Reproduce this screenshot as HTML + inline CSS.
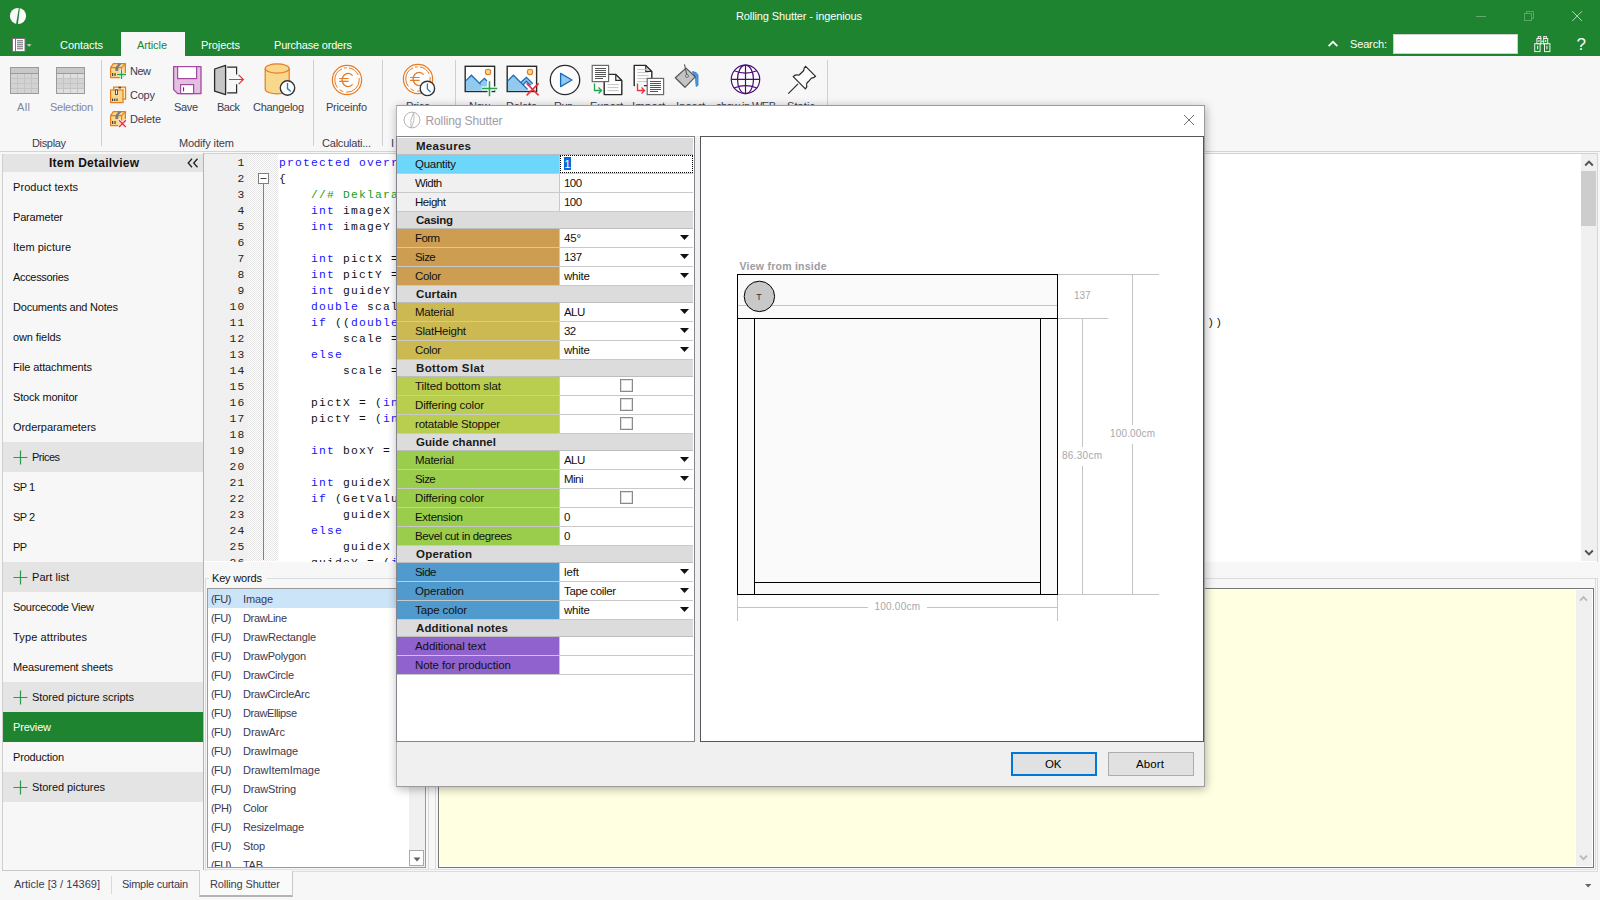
<!DOCTYPE html>
<html><head><meta charset="utf-8"><title>Rolling Shutter - ingenious</title>
<style>
html,body{margin:0;padding:0;}
body{width:1600px;height:900px;position:relative;overflow:hidden;background:#f7f7f7;font-family:"Liberation Sans",sans-serif;}
.b{position:absolute;display:block;}
.t{position:absolute;white-space:nowrap;display:block;}
.m{font-family:"Liberation Mono",monospace;}
</style></head><body>
<div class="b" style="left:0px;top:0px;width:1600px;height:56px;background:#1e8430;"></div>
<span class="t" style="left:736px;top:8px;font-size:11px;line-height:16px;color:#fff;letter-spacing:-0.116px;">Rolling Shutter - ingenious</span>
<div class="b" style="left:121px;top:32px;width:64px;height:24px;background:#f7f7f7;"></div>
<span class="t" style="left:60px;top:37px;font-size:11px;line-height:16px;color:#fff;letter-spacing:-0.058px;">Contacts</span>
<span class="t" style="left:137px;top:37px;font-size:11px;line-height:16px;color:#1e8430;letter-spacing:-0.094px;">Article</span>
<span class="t" style="left:201px;top:37px;font-size:11px;line-height:16px;color:#fff;letter-spacing:-0.105px;">Projects</span>
<span class="t" style="left:274px;top:37px;font-size:11px;line-height:16px;color:#fff;letter-spacing:-0.193px;">Purchase orders</span>
<span class="t" style="left:1350px;top:36px;font-size:11px;line-height:16px;color:#fff;letter-spacing:-0.152px;">Search:</span>
<div class="b" style="left:1393px;top:34px;width:125px;height:20px;background:#fff;border:1px solid #cfcfcf;box-sizing:border-box;"></div>
<svg class="b" style="left:8px;top:6px;" width="20" height="20" viewBox="0 0 20 20"><circle cx="10" cy="10" r="8.1" fill="#fbfbfb"/><path d="M10.9 1.5 L11.9 1.5 L9.9 18.6 L8.0 18.6 Z" fill="#1e8430"/></svg>
<svg class="b" style="left:11px;top:37px;" width="22" height="16" viewBox="0 0 22 16"><rect x="1.5" y="1.5" width="12.5" height="13" fill="#fff" stroke="#7f6f7d" stroke-width="1"/><path d="M4.5 2 V14" stroke="#7f6f7d" stroke-width="1"/><path d="M6 3.8 H12 M6 5.8 H12 M6 7.8 H12 M6 9.8 H12 M6 11.8 H12" stroke="#666" stroke-width="1"/><path d="M15.6 7.2 H20.6 L18.1 9.7 Z" fill="#d3cbd3"/></svg>
<svg class="b" style="left:1327px;top:39px;" width="12" height="9" viewBox="0 0 12 9"><path d="M1.6 7.2 L6 2.8 L10.4 7.2" fill="none" stroke="#fff" stroke-width="1.7"/></svg>
<svg class="b" style="left:1533px;top:35px;" width="19" height="18" viewBox="0 0 19 18"><g fill="none" stroke="#f3eef3" stroke-width="1"><rect x="1.7" y="8.7" width="5.4" height="7.9"/><rect x="11.5" y="8.7" width="5.4" height="7.9"/><rect x="3.9" y="3.5" width="4" height="5.2"/><rect x="10.7" y="3.5" width="4" height="5.2"/><rect x="5.2" y="1.6" width="2.6" height="1.9"/><rect x="10.8" y="1.6" width="2.6" height="1.9"/><path d="M4.6 10.8 V14.2 M13.9 10.8 V14.2 M5.9 5 V7 M12.7 5 V7" stroke-width="1.1"/><path d="M8.4 6.3 H10.2" stroke-width="1.1"/><path d="M7.4 9.4 Q9.3 7.4 11.2 9.4"/></g></svg>
<span class="t" style="left:1576.5px;top:35.5px;font-size:17px;line-height:18px;color:#fff;">?</span>
<div class="b" style="left:1476px;top:16px;width:10px;height:1px;background:#63a970;"></div>
<svg class="b" style="left:1523px;top:10px;" width="13" height="13" viewBox="0 0 13 13"><path d="M3.5 3.5 V1.5 H10.5 V8.5 H8.5" fill="none" stroke="#5da56b"/><rect x="1.5" y="3.5" width="7" height="7" fill="none" stroke="#5da56b"/></svg>
<svg class="b" style="left:1571px;top:10px;" width="13" height="13" viewBox="0 0 13 13"><path d="M1.2 1.2 L11 11 M11 1.2 L1.2 11" stroke="#b4d5ba" stroke-width="1" fill="none"/></svg>
<div class="b" style="left:0px;top:56px;width:1600px;height:95px;background:#f7f7f7;"></div>
<div class="b" style="left:0px;top:151px;width:1600px;height:1px;background:#d4d4d4;"></div>
<div class="b" style="left:101px;top:60px;width:1px;height:86px;background:#d0d0d0;"></div>
<div class="b" style="left:313px;top:60px;width:1px;height:86px;background:#d0d0d0;"></div>
<div class="b" style="left:382px;top:60px;width:1px;height:86px;background:#d0d0d0;"></div>
<div class="b" style="left:455px;top:60px;width:1px;height:86px;background:#d0d0d0;"></div>
<div class="b" style="left:827px;top:60px;width:1px;height:86px;background:#d0d0d0;"></div>
<span class="t" style="left:17px;top:99px;font-size:11px;line-height:16px;color:#85859a;letter-spacing:0.388px;">All</span>
<span class="t" style="left:50px;top:99px;font-size:11px;line-height:16px;color:#85859a;letter-spacing:-0.281px;">Selection</span>
<span class="t" style="left:32px;top:135px;font-size:11px;line-height:16px;color:#3c3c50;letter-spacing:-0.345px;">Display</span>
<span class="t" style="left:130px;top:63px;font-size:11px;line-height:16px;color:#3c3c50;letter-spacing:-0.503px;">New</span>
<span class="t" style="left:130px;top:87px;font-size:11px;line-height:16px;color:#3c3c50;letter-spacing:-0.226px;">Copy</span>
<span class="t" style="left:130px;top:111px;font-size:11px;line-height:16px;color:#3c3c50;letter-spacing:-0.159px;">Delete</span>
<span class="t" style="left:174px;top:99px;font-size:11px;line-height:16px;color:#3c3c50;letter-spacing:-0.357px;">Save</span>
<span class="t" style="left:217px;top:99px;font-size:11px;line-height:16px;color:#3c3c50;letter-spacing:-0.485px;">Back</span>
<span class="t" style="left:253px;top:99px;font-size:11px;line-height:16px;color:#3c3c50;letter-spacing:-0.276px;">Changelog</span>
<span class="t" style="left:179px;top:135px;font-size:11px;line-height:16px;color:#3c3c50;letter-spacing:-0.124px;">Modify item</span>
<span class="t" style="left:326px;top:99px;font-size:11px;line-height:16px;color:#3c3c50;letter-spacing:-0.225px;">Priceinfo</span>
<span class="t" style="left:322px;top:135px;font-size:11px;line-height:16px;color:#3c3c50;letter-spacing:-0.214px;">Calculati...</span>
<span class="t" style="left:391px;top:135px;font-size:11px;line-height:16px;color:#3c3c50;">I</span>
<span class="t" style="left:406px;top:98.3px;font-size:11px;line-height:16px;color:#3c3c50;letter-spacing:-0.265px;">Price</span>
<span class="t" style="left:469px;top:98.3px;font-size:11px;line-height:16px;color:#3c3c50;letter-spacing:-0.503px;">New</span>
<span class="t" style="left:506px;top:98.3px;font-size:11px;line-height:16px;color:#3c3c50;letter-spacing:-0.159px;">Delete</span>
<span class="t" style="left:554px;top:98.3px;font-size:11px;line-height:16px;color:#3c3c50;letter-spacing:-0.550px;">Run</span>
<span class="t" style="left:590px;top:98.3px;font-size:11px;line-height:16px;color:#3c3c50;letter-spacing:0.242px;">Export</span>
<span class="t" style="left:632px;top:98.3px;font-size:11px;line-height:16px;color:#3c3c50;letter-spacing:0.365px;">Import</span>
<span class="t" style="left:676px;top:98.3px;font-size:11px;line-height:16px;color:#3c3c50;letter-spacing:0.298px;">Insert</span>
<span class="t" style="left:716px;top:98.3px;font-size:11px;line-height:16px;color:#3c3c50;letter-spacing:-0.541px;">show in WEB</span>
<span class="t" style="left:787px;top:98.3px;font-size:11px;line-height:16px;color:#3c3c50;letter-spacing:0.098px;">Static</span>
<svg class="b" style="left:10px;top:67px;" width="29" height="27" viewBox="0 0 29 27"><rect x="0.5" y="0.5" width="28" height="26" fill="#d3d3d3" stroke="#9b9b9b"/><rect x="1" y="1" width="27" height="5.5" fill="#c8c8c8"/><path d="M0.5 6.5 H28.5" stroke="#9b9b9b"/><path d="M7.5 7 V26 M14.5 7 V26 M21.5 7 V26 M1 11.5 H28 M1 16.5 H28 M1 21.5 H28" stroke="#c4c4c4" fill="none"/></svg>
<svg class="b" style="left:56px;top:67px;" width="29" height="27" viewBox="0 0 29 27"><rect x="0.5" y="0.5" width="28" height="26" fill="#d3d3d3" stroke="#9b9b9b"/><rect x="1" y="7" width="27" height="5" fill="#dfdfdf"/><rect x="1" y="22" width="27" height="4" fill="#dfdfdf"/><rect x="1" y="1" width="27" height="5.5" fill="#c8c8c8"/><path d="M0.5 6.5 H28.5" stroke="#9b9b9b"/><path d="M7.5 7 V26 M14.5 7 V26 M21.5 7 V26 M1 11.5 H28 M1 16.5 H28 M1 21.5 H28" stroke="#c4c4c4" fill="none"/></svg>
<svg class="b" style="left:110px;top:63px;" width="18" height="18" viewBox="0 0 18 18"><path d="M0.6 4.6 L3.4 0.6 H15.4 V10.5 L12 14.6 H0.6 Z" fill="#f8d88c" stroke="#e87a22" stroke-width="1.2" stroke-linejoin="round"/><path d="M0.6 4.6 H11.6 L15.2 0.8 M11.6 4.6 V14.4" fill="none" stroke="#e87a22" stroke-width="1.1"/><path d="M8.6 0.6 H11.6 L8.2 4.6 V8 H5.4 V4.4 Z" fill="#7a7a7a"/><path d="M2.7 10 V13 M5 10 V13" stroke="#222" stroke-width="1"/><path d="M6.6 11.5 H16.4 M11.5 6.8 V16.4" stroke="#f7f7f7" stroke-width="3.2"/><path d="M7 11.5 H16 M11.5 7 V16" stroke="#1fa84a" stroke-width="1.3"/></svg>
<svg class="b" style="left:110px;top:86px;" width="18" height="18" viewBox="0 0 18 18"><path d="M3.6 4 V1.2 H15.6 V13.2 H13" fill="#fbe9bf" stroke="#e87a22" stroke-width="1.2"/><path d="M8.6 0.8 h2.4 v1.6 h-2.4 z" fill="#444"/><rect x="0.6" y="4" width="12.4" height="12.6" fill="#f8d88c" stroke="#e87a22" stroke-width="1.2"/><rect x="5.5" y="4" width="2" height="4.4" fill="#fff" stroke="#444" stroke-width="0.9"/><path d="M2.6 12.6 V15 M4.8 12.6 V15 M7 12.6 V15" stroke="#222" stroke-width="1"/></svg>
<svg class="b" style="left:110px;top:111px;" width="18" height="18" viewBox="0 0 18 18"><path d="M0.6 4.6 L3.4 0.6 H15.4 V10.5 L12 14.6 H0.6 Z" fill="#f8d88c" stroke="#e87a22" stroke-width="1.2" stroke-linejoin="round"/><path d="M0.6 4.6 H11.6 L15.2 0.8 M11.6 4.6 V14.4" fill="none" stroke="#e87a22" stroke-width="1.1"/><path d="M8.6 0.6 H11.6 L8.2 4.6 V8 H5.4 V4.4 Z" fill="#7a7a7a"/><path d="M2.7 10 V13 M5 10 V13" stroke="#222" stroke-width="1"/><path d="M8.6 8.8 L16.2 16.4 M16.2 8.8 L8.6 16.4" stroke="#f7f7f7" stroke-width="3"/><path d="M9 9.2 L15.8 16 M15.8 9.2 L9 16" stroke="#e8303f" stroke-width="1.3"/></svg>
<svg class="b" style="left:172px;top:65px;" width="31" height="30" viewBox="0 0 31 30"><path d="M1.6 1.6 H29 V28.6 H5.6 L1.6 24.6 Z" fill="#e3c0e0" stroke="#a349a4" stroke-width="1.3" stroke-linejoin="round"/><rect x="5.6" y="1.6" width="19" height="12" fill="#fff" stroke="#a349a4" stroke-width="1.2"/><rect x="8.6" y="19.6" width="13" height="9" fill="#fff" stroke="#a349a4" stroke-width="1.2"/><path d="M11.6 22.3 V26.3" stroke="#333" stroke-width="1"/></svg>
<svg class="b" style="left:213px;top:64px;" width="33" height="32" viewBox="0 0 33 32"><path d="M1.6 5 L12.6 1.4 V30.6 L1.6 27.2 Z" fill="#c6c6c6" stroke="#2a2a2a" stroke-width="1.3" stroke-linejoin="round"/><path d="M14.2 3.2 H23.6 V10.6 M23.6 20.2 V28.8 H14.2" fill="none" stroke="#2a2a2a" stroke-width="1.2"/><path d="M16 15.5 H30.2 M25.6 10.9 L30.4 15.5 L25.6 20.1" fill="none" stroke="#e8303f" stroke-width="1.2"/></svg>
<svg class="b" style="left:263px;top:62px;" width="34" height="35" viewBox="0 0 34 35"><path d="M2.2 6.5 V27.2 A12 4.6 0 0 0 26.2 27.2 V6.5" fill="#f8d88c" stroke="#e87a22" stroke-width="1.2"/><ellipse cx="14.2" cy="6.5" rx="12" ry="4.6" fill="#f8d88c" stroke="#e87a22" stroke-width="1.2"/><circle cx="24.5" cy="26" r="7.2" fill="#fff" stroke="#333" stroke-width="1.4"/><path d="M24.5 21 V26.6 L27.8 29.6" fill="none" stroke="#1c7cd5" stroke-width="1.3"/></svg>
<svg class="b" style="left:331px;top:64px;" width="34" height="34" viewBox="0 0 34 34"><circle cx="16" cy="16" r="14.6" fill="#fdfdfd" stroke="#e87a22" stroke-width="1.2"/><circle cx="16" cy="16" r="12.2" fill="none" stroke="#e87a22" stroke-width="1" stroke-dasharray="20 3 4 3 22 2 3 2 12 3"/><path d="M21.6 11.6 A6 6.6 0 1 0 21.6 20.4" fill="none" stroke="#e87a22" stroke-width="1.3"/><path d="M8.2 14.5 H17.6 M8.2 17.3 H17.6" stroke="#e87a22" stroke-width="1.2"/></svg>
<svg class="b" style="left:402px;top:63px;" width="34" height="34" viewBox="0 0 34 34"><circle cx="16" cy="16" r="14.6" fill="#fdfdfd" stroke="#e87a22" stroke-width="1.2"/><circle cx="16" cy="16" r="12.2" fill="none" stroke="#e87a22" stroke-width="1" stroke-dasharray="20 3 4 3 22 2 3 2 12 3"/><path d="M21.6 11.6 A6 6.6 0 1 0 21.6 20.4" fill="none" stroke="#e87a22" stroke-width="1.3"/><path d="M8.2 14.5 H17.6 M8.2 17.3 H17.6" stroke="#e87a22" stroke-width="1.2"/><circle cx="25.4" cy="25.4" r="7.2" fill="#fff" stroke="#333" stroke-width="1.4"/><path d="M25.4 20.4 V26 L28.6 29" fill="none" stroke="#1c7cd5" stroke-width="1.3"/></svg>
<svg class="b" style="left:464px;top:65px;" width="36" height="33" viewBox="0 0 36 33"><rect x="1.2" y="1.3" width="29.4" height="25.2" fill="#fff" stroke="#2a2a2a" stroke-width="1.4"/><circle cx="24" cy="7" r="2.7" fill="#f8d88c" stroke="#e87a22" stroke-width="1.1"/><path d="M2 15.6 L7.4 10.2 L16 18.8 L20.4 13.4 L23 16 V25.8 H2 Z" fill="#92c9ee"/><path d="M2 15.6 L7.4 10.2 L16.6 19.4 M15.4 18.2 L20.4 13.4 L23 16" fill="none" stroke="#1a6ab8" stroke-width="1.3"/><path d="M17.6 23.5 H33.8 M25.5 15.8 V31.6" stroke="#f7f7f7" stroke-width="4"/><path d="M18 23.5 H33.2 M25.5 16.2 V31.2" stroke="#1fa84a" stroke-width="1.5"/></svg>
<svg class="b" style="left:506px;top:65px;" width="36" height="33" viewBox="0 0 36 33"><rect x="1.2" y="1.3" width="29.4" height="25.2" fill="#fff" stroke="#2a2a2a" stroke-width="1.4"/><circle cx="24" cy="7" r="2.7" fill="#f8d88c" stroke="#e87a22" stroke-width="1.1"/><path d="M2 15.6 L7.4 10.2 L21.6 24.4 L20.2 25.8 H2 Z" fill="#92c9ee"/><path d="M14.6 17.6 L20.4 12.4 L26.6 18.8 L24.8 20.4 L20.4 16 L17 19.8 Z" fill="#92c9ee"/><path d="M2 15.6 L7.4 10.2 L21.6 24.4 M14.8 17.4 L20.4 12.4 L26.8 18.8 M17.2 19.8 L20.4 16.2 L24.6 20.4" fill="none" stroke="#1a6ab8" stroke-width="1.3"/><path d="M20.6 18.4 L32.6 30.4 M32.6 18.4 L20.6 30.4" stroke="#e8303f" stroke-width="1.5"/></svg>
<svg class="b" style="left:549px;top:64px;" width="32" height="32" viewBox="0 0 32 32"><circle cx="16" cy="16" r="14.7" fill="#fdfdfd" stroke="#2a2a2a" stroke-width="1.3"/><path d="M11.6 9.4 V22.6 L23 16 Z" fill="#92c9ee" stroke="#1a6ab8" stroke-width="1.3" stroke-linejoin="round"/></svg>
<svg class="b" style="left:591px;top:64px;" width="33" height="33" viewBox="0 0 33 33"><path d="M13.2 10.4 H24.8 L30.8 16.4 V30.6 H13.2 Z" fill="#fff" stroke="#2a2a2a" stroke-width="1.4" stroke-linejoin="round"/><path d="M24.8 10.4 V16.4 H30.8" fill="none" stroke="#2a2a2a" stroke-width="1.2"/><path d="M16.4 26.6 h11.2" stroke="#c4c4c4" stroke-width="1"/><path d="M16.4 23.6 h11.2" stroke="#c4c4c4" stroke-width="1"/><path d="M16.4 20.6 h11.2" stroke="#c4c4c4" stroke-width="1"/><rect x="1.2" y="1.4" width="16.4" height="16.2" fill="#fff" stroke="#6a6a6a" stroke-width="1.2"/><path d="M4 4.5 h11 m-11 2 h11 m-11 2 h11 m-11 2 h11 m-11 2 h11 m-11 2 h8" stroke="#555" stroke-width="1" fill="none"/><path d="M3.5 19.5 V26.5 H10.5 M7.5 23.5 L10.5 26.5 L7.5 29.5" fill="none" stroke="#1fa84a" stroke-width="1.3"/></svg>
<svg class="b" style="left:633px;top:64px;" width="33" height="33" viewBox="0 0 33 33"><path d="M1.2 1.4 H12.8 L18.8 7.4 V21.6 H1.2 Z" fill="#fff" stroke="#2a2a2a" stroke-width="1.4" stroke-linejoin="round"/><path d="M12.8 1.4 V7.4 H18.8" fill="none" stroke="#2a2a2a" stroke-width="1.2"/><path d="M4.4 17.6 h11.2" stroke="#c4c4c4" stroke-width="1"/><path d="M4.4 14.6 h11.2" stroke="#c4c4c4" stroke-width="1"/><path d="M4.4 11.6 h11.2" stroke="#c4c4c4" stroke-width="1"/><path d="M4.4 8.6 h11.2" stroke="#c4c4c4" stroke-width="1"/><path d="M4.4 5.6 h11.2" stroke="#c4c4c4" stroke-width="1"/><rect x="2" y="19.5" width="9" height="13" fill="#f7f7f7"/><rect x="14.2" y="14.4" width="16.4" height="16.2" fill="#fff" stroke="#6a6a6a" stroke-width="1.2"/><path d="M17 17.5 h11 m-11 2 h11 m-11 2 h11 m-11 2 h11 m-11 2 h11 m-11 2 h8" stroke="#555" stroke-width="1" fill="none"/><path d="M4.5 19.5 V26.5 H11.5 M8.5 23.5 L11.5 26.5 L8.5 29.5" fill="none" stroke="#e8303f" stroke-width="1.3"/></svg>
<svg class="b" style="left:673px;top:62px;" width="28" height="28" viewBox="0 0 28 28"><path d="M19.4 9.6 Q24.6 10.4 25 13.4 V23.2 L23.2 24.6 Q22.8 16 21.2 13.4 Z" fill="#4a9ade" stroke="#2a7ac8" stroke-width="0.8"/><path d="M2.3 15.7 L13 6.1 L22.2 14.8 L12 25.3 Z" fill="#c4c4c4" stroke="#555" stroke-width="1.2" stroke-linejoin="round"/><path d="M11.5 2.4 L13.8 13" stroke="#555" stroke-width="1.1"/><circle cx="14" cy="14" r="1.4" fill="#fff" stroke="#555" stroke-width="0.9"/></svg>
<svg class="b" style="left:730px;top:64px;" width="32" height="32" viewBox="0 0 32 32"><g fill="none" stroke="#4b0a78" stroke-width="1.2"><circle cx="15.5" cy="15.4" r="14.2" fill="#fdfdfd"/><ellipse cx="15.5" cy="15.4" rx="8" ry="14.2"/><path d="M15.5 1.2 V29.6 M1.3 15.4 H29.7"/><path d="M4.2 6.8 Q15.5 11.6 26.8 6.8 M4.2 24 Q15.5 19.2 26.8 24"/></g></svg>
<svg class="b" style="left:786px;top:64px;" width="32" height="32" viewBox="0 0 32 32"><path d="M2.3 29.6 L12 19.9" stroke="#2a2a2a" stroke-width="1.2"/><path d="M7.2 12.6 L19.4 24.8 Q21.6 22.6 20.6 20.4 Q20.4 18.6 22.4 17.6 L25.4 14.2 Q27.4 14.4 29.6 12.3 L19.6 2.3 Q17.4 4.4 17.8 6.5 L14.2 10 Q12.6 11.8 11 10.8 Q8.8 10.6 7.2 12.6 Z" fill="#fdfdfd" stroke="#2a2a2a" stroke-width="1.2" stroke-linejoin="round"/></svg>
<div class="b" style="left:2px;top:154px;width:1px;height:716px;background:#cfcfcf;"></div>
<div class="b" style="left:203px;top:153px;width:1px;height:717px;background:#b4b4b4;"></div>
<div class="b" style="left:3px;top:154px;width:200px;height:18px;background:#e4e4e4;"></div>
<span class="t" style="left:49px;top:154.5px;font-size:12px;line-height:16px;color:#111;font-weight:bold;letter-spacing:0.236px;">Item Detailview</span>
<svg class="b" style="left:187px;top:158px;" width="12" height="10" viewBox="0 0 12 10"><path d="M5 .8 L1.2 5 L5 9.2 M10.5 .8 L6.7 5 L10.5 9.2" fill="none" stroke="#222" stroke-width="1.3"/></svg>
<span class="t" style="left:13px;top:179px;font-size:11px;line-height:16px;color:#111;letter-spacing:0.067px;">Product texts</span>
<span class="t" style="left:13px;top:209px;font-size:11px;line-height:16px;color:#111;letter-spacing:-0.169px;">Parameter</span>
<span class="t" style="left:13px;top:239px;font-size:11px;line-height:16px;color:#111;letter-spacing:0.049px;">Item picture</span>
<span class="t" style="left:13px;top:269px;font-size:11px;line-height:16px;color:#111;letter-spacing:-0.330px;">Accessories</span>
<span class="t" style="left:13px;top:299px;font-size:11px;line-height:16px;color:#111;letter-spacing:-0.213px;">Documents and Notes</span>
<span class="t" style="left:13px;top:329px;font-size:11px;line-height:16px;color:#111;letter-spacing:-0.102px;">own fields</span>
<span class="t" style="left:13px;top:359px;font-size:11px;line-height:16px;color:#111;letter-spacing:-0.113px;">File attachments</span>
<span class="t" style="left:13px;top:389px;font-size:11px;line-height:16px;color:#111;letter-spacing:-0.187px;">Stock monitor</span>
<span class="t" style="left:13px;top:419px;font-size:11px;line-height:16px;color:#111;letter-spacing:-0.054px;">Orderparameters</span>
<div class="b" style="left:3px;top:442px;width:200px;height:30px;background:#e4e4e4;"></div>
<svg class="b" style="left:13px;top:450px;" width="15" height="15" viewBox="0 0 15 15"><path d="M7.5 0.5 V14.5 M0.5 7.5 H14.5" stroke="#2a9a45" stroke-width="1.2" fill="none"/></svg>
<span class="t" style="left:32px;top:449px;font-size:11px;line-height:16px;color:#111;letter-spacing:-0.512px;">Prices</span>
<span class="t" style="left:13px;top:479px;font-size:11px;line-height:16px;color:#111;letter-spacing:-0.550px;">SP 1</span>
<span class="t" style="left:13px;top:509px;font-size:11px;line-height:16px;color:#111;letter-spacing:-0.550px;">SP 2</span>
<span class="t" style="left:13px;top:539px;font-size:11px;line-height:16px;color:#111;letter-spacing:-0.550px;">PP</span>
<div class="b" style="left:3px;top:562px;width:200px;height:30px;background:#e4e4e4;"></div>
<svg class="b" style="left:13px;top:570px;" width="15" height="15" viewBox="0 0 15 15"><path d="M7.5 0.5 V14.5 M0.5 7.5 H14.5" stroke="#2a9a45" stroke-width="1.2" fill="none"/></svg>
<span class="t" style="left:32px;top:569px;font-size:11px;line-height:16px;color:#111;letter-spacing:0.041px;">Part list</span>
<span class="t" style="left:13px;top:599px;font-size:11px;line-height:16px;color:#111;letter-spacing:-0.315px;">Sourcecode View</span>
<span class="t" style="left:13px;top:629px;font-size:11px;line-height:16px;color:#111;letter-spacing:0.132px;">Type attributes</span>
<span class="t" style="left:13px;top:659px;font-size:11px;line-height:16px;color:#111;letter-spacing:-0.160px;">Measurement sheets</span>
<div class="b" style="left:3px;top:682px;width:200px;height:30px;background:#e4e4e4;"></div>
<svg class="b" style="left:13px;top:690px;" width="15" height="15" viewBox="0 0 15 15"><path d="M7.5 0.5 V14.5 M0.5 7.5 H14.5" stroke="#2a9a45" stroke-width="1.2" fill="none"/></svg>
<span class="t" style="left:32px;top:689px;font-size:11px;line-height:16px;color:#111;letter-spacing:-0.063px;">Stored picture scripts</span>
<div class="b" style="left:3px;top:712px;width:200px;height:30px;background:#1e8430;"></div>
<span class="t" style="left:13px;top:719px;font-size:11px;line-height:16px;color:#fff;letter-spacing:-0.187px;">Preview</span>
<span class="t" style="left:13px;top:749px;font-size:11px;line-height:16px;color:#111;letter-spacing:-0.177px;">Production</span>
<div class="b" style="left:3px;top:772px;width:200px;height:30px;background:#e4e4e4;"></div>
<svg class="b" style="left:13px;top:780px;" width="15" height="15" viewBox="0 0 15 15"><path d="M7.5 0.5 V14.5 M0.5 7.5 H14.5" stroke="#2a9a45" stroke-width="1.2" fill="none"/></svg>
<span class="t" style="left:32px;top:779px;font-size:11px;line-height:16px;color:#111;letter-spacing:-0.070px;">Stored pictures</span>
<div class="b" style="left:204px;top:153px;width:1394px;height:409px;background:#fff;border:1px solid #d2d2d2;border-left:none;border-bottom:none;box-sizing:border-box;"></div>
<div class="b" style="left:1597px;top:153px;width:1px;height:719px;background:#d6d6d6;"></div>
<div class="b" style="left:204px;top:154px;width:44px;height:407px;background:#f0f0f0;"></div>
<svg class="b" style="left:248px;top:154px;" width="30" height="407" viewBox="0 0 30 407"><defs><pattern id="ck" width="2" height="2" patternUnits="userSpaceOnUse"><rect width="2" height="2" fill="#fff"/><rect width="1" height="1" fill="#e6e6e6"/><rect x="1" y="1" width="1" height="1" fill="#e6e6e6"/></pattern></defs><rect width="30" height="407" fill="url(#ck)"/></svg>
<span class="t m" style="left:237.4px;top:155.3px;font-size:11.3px;line-height:16px;color:#222;white-space:pre;letter-spacing:1.22px;">1</span>
<span class="t m" style="left:279px;top:155.3px;font-size:11.3px;letter-spacing:1.22px;line-height:16px;color:#111;white-space:pre;"><span style="color:#1414ff">protected override void</span><span style="color:#111"> OnPaint(PaintEventArgs e)</span></span>
<span class="t m" style="left:237.4px;top:171.3px;font-size:11.3px;line-height:16px;color:#222;white-space:pre;letter-spacing:1.22px;">2</span>
<span class="t m" style="left:279px;top:171.3px;font-size:11.3px;letter-spacing:1.22px;line-height:16px;color:#111;white-space:pre;"><span style="color:#111">{</span></span>
<span class="t m" style="left:237.4px;top:187.3px;font-size:11.3px;line-height:16px;color:#222;white-space:pre;letter-spacing:1.22px;">3</span>
<span class="t m" style="left:279px;top:187.3px;font-size:11.3px;letter-spacing:1.22px;line-height:16px;color:#111;white-space:pre;"><span style="color:#1a9a1a">    //# Deklaration der Variablen</span></span>
<span class="t m" style="left:237.4px;top:203.3px;font-size:11.3px;line-height:16px;color:#222;white-space:pre;letter-spacing:1.22px;">4</span>
<span class="t m" style="left:279px;top:203.3px;font-size:11.3px;letter-spacing:1.22px;line-height:16px;color:#111;white-space:pre;"><span style="color:#1414ff">    int</span><span style="color:#111"> imageX = 320;</span></span>
<span class="t m" style="left:237.4px;top:219.3px;font-size:11.3px;line-height:16px;color:#222;white-space:pre;letter-spacing:1.22px;">5</span>
<span class="t m" style="left:279px;top:219.3px;font-size:11.3px;letter-spacing:1.22px;line-height:16px;color:#111;white-space:pre;"><span style="color:#1414ff">    int</span><span style="color:#111"> imageY = 320;</span></span>
<span class="t m" style="left:237.4px;top:235.3px;font-size:11.3px;line-height:16px;color:#222;white-space:pre;letter-spacing:1.22px;">6</span>
<span class="t m" style="left:237.4px;top:251.3px;font-size:11.3px;line-height:16px;color:#222;white-space:pre;letter-spacing:1.22px;">7</span>
<span class="t m" style="left:279px;top:251.3px;font-size:11.3px;letter-spacing:1.22px;line-height:16px;color:#111;white-space:pre;"><span style="color:#1414ff">    int</span><span style="color:#111"> pictX = 0;</span></span>
<span class="t m" style="left:237.4px;top:267.3px;font-size:11.3px;line-height:16px;color:#222;white-space:pre;letter-spacing:1.22px;">8</span>
<span class="t m" style="left:279px;top:267.3px;font-size:11.3px;letter-spacing:1.22px;line-height:16px;color:#111;white-space:pre;"><span style="color:#1414ff">    int</span><span style="color:#111"> pictY = 0;</span></span>
<span class="t m" style="left:237.4px;top:283.3px;font-size:11.3px;line-height:16px;color:#222;white-space:pre;letter-spacing:1.22px;">9</span>
<span class="t m" style="left:279px;top:283.3px;font-size:11.3px;letter-spacing:1.22px;line-height:16px;color:#111;white-space:pre;"><span style="color:#1414ff">    int</span><span style="color:#111"> guideY = 0;</span></span>
<span class="t m" style="left:229.4px;top:299.3px;font-size:11.3px;line-height:16px;color:#222;white-space:pre;letter-spacing:1.22px;">10</span>
<span class="t m" style="left:279px;top:299.3px;font-size:11.3px;letter-spacing:1.22px;line-height:16px;color:#111;white-space:pre;"><span style="color:#1414ff">    double</span><span style="color:#111"> scale = 1.0;</span></span>
<span class="t m" style="left:229.4px;top:315.3px;font-size:11.3px;line-height:16px;color:#222;white-space:pre;letter-spacing:1.22px;">11</span>
<span class="t m" style="left:279px;top:315.3px;font-size:11.3px;letter-spacing:1.22px;line-height:16px;color:#111;white-space:pre;"><span style="color:#1414ff">    if</span><span style="color:#111"> ((</span><span style="color:#1414ff">double</span><span style="color:#111">)Width &gt; Height)</span></span>
<span class="t m" style="left:229.4px;top:331.3px;font-size:11.3px;line-height:16px;color:#222;white-space:pre;letter-spacing:1.22px;">12</span>
<span class="t m" style="left:279px;top:331.3px;font-size:11.3px;letter-spacing:1.22px;line-height:16px;color:#111;white-space:pre;"><span style="color:#111">        scale = imageX / Width;</span></span>
<span class="t m" style="left:229.4px;top:347.3px;font-size:11.3px;line-height:16px;color:#222;white-space:pre;letter-spacing:1.22px;">13</span>
<span class="t m" style="left:279px;top:347.3px;font-size:11.3px;letter-spacing:1.22px;line-height:16px;color:#111;white-space:pre;"><span style="color:#1414ff">    else</span></span>
<span class="t m" style="left:229.4px;top:363.3px;font-size:11.3px;line-height:16px;color:#222;white-space:pre;letter-spacing:1.22px;">14</span>
<span class="t m" style="left:279px;top:363.3px;font-size:11.3px;letter-spacing:1.22px;line-height:16px;color:#111;white-space:pre;"><span style="color:#111">        scale = imageY / Height;</span></span>
<span class="t m" style="left:229.4px;top:379.3px;font-size:11.3px;line-height:16px;color:#222;white-space:pre;letter-spacing:1.22px;">15</span>
<span class="t m" style="left:229.4px;top:395.3px;font-size:11.3px;line-height:16px;color:#222;white-space:pre;letter-spacing:1.22px;">16</span>
<span class="t m" style="left:279px;top:395.3px;font-size:11.3px;letter-spacing:1.22px;line-height:16px;color:#111;white-space:pre;"><span style="color:#111">    pictX = (</span><span style="color:#1414ff">int</span><span style="color:#111">)(Width * scale);</span></span>
<span class="t m" style="left:229.4px;top:411.3px;font-size:11.3px;line-height:16px;color:#222;white-space:pre;letter-spacing:1.22px;">17</span>
<span class="t m" style="left:279px;top:411.3px;font-size:11.3px;letter-spacing:1.22px;line-height:16px;color:#111;white-space:pre;"><span style="color:#111">    pictY = (</span><span style="color:#1414ff">int</span><span style="color:#111">)(Height * scale);</span></span>
<span class="t m" style="left:229.4px;top:427.3px;font-size:11.3px;line-height:16px;color:#222;white-space:pre;letter-spacing:1.22px;">18</span>
<span class="t m" style="left:229.4px;top:443.3px;font-size:11.3px;line-height:16px;color:#222;white-space:pre;letter-spacing:1.22px;">19</span>
<span class="t m" style="left:279px;top:443.3px;font-size:11.3px;letter-spacing:1.22px;line-height:16px;color:#111;white-space:pre;"><span style="color:#1414ff">    int</span><span style="color:#111"> boxY = (</span><span style="color:#1414ff">int</span><span style="color:#111">)(Size * scale);</span></span>
<span class="t m" style="left:229.4px;top:459.3px;font-size:11.3px;line-height:16px;color:#222;white-space:pre;letter-spacing:1.22px;">20</span>
<span class="t m" style="left:229.4px;top:475.3px;font-size:11.3px;line-height:16px;color:#222;white-space:pre;letter-spacing:1.22px;">21</span>
<span class="t m" style="left:279px;top:475.3px;font-size:11.3px;letter-spacing:1.22px;line-height:16px;color:#111;white-space:pre;"><span style="color:#1414ff">    int</span><span style="color:#111"> guideX = 0;</span></span>
<span class="t m" style="left:229.4px;top:491.3px;font-size:11.3px;line-height:16px;color:#222;white-space:pre;letter-spacing:1.22px;">22</span>
<span class="t m" style="left:279px;top:491.3px;font-size:11.3px;letter-spacing:1.22px;line-height:16px;color:#111;white-space:pre;"><span style="color:#1414ff">    if</span><span style="color:#111"> (GetValue("Size") == "Mini")</span></span>
<span class="t m" style="left:229.4px;top:507.3px;font-size:11.3px;line-height:16px;color:#222;white-space:pre;letter-spacing:1.22px;">23</span>
<span class="t m" style="left:279px;top:507.3px;font-size:11.3px;letter-spacing:1.22px;line-height:16px;color:#111;white-space:pre;"><span style="color:#111">        guideX = 17;</span></span>
<span class="t m" style="left:229.4px;top:523.3px;font-size:11.3px;line-height:16px;color:#222;white-space:pre;letter-spacing:1.22px;">24</span>
<span class="t m" style="left:279px;top:523.3px;font-size:11.3px;letter-spacing:1.22px;line-height:16px;color:#111;white-space:pre;"><span style="color:#1414ff">    else</span></span>
<span class="t m" style="left:229.4px;top:539.3px;font-size:11.3px;line-height:16px;color:#222;white-space:pre;letter-spacing:1.22px;">25</span>
<span class="t m" style="left:279px;top:539.3px;font-size:11.3px;letter-spacing:1.22px;line-height:16px;color:#111;white-space:pre;"><span style="color:#111">        guideX = 25;</span></span>
<span class="t m" style="left:229.4px;top:555.3px;font-size:11.3px;line-height:16px;color:#222;white-space:pre;letter-spacing:1.22px;">26</span>
<span class="t m" style="left:279px;top:555.3px;font-size:11.3px;letter-spacing:1.22px;line-height:16px;color:#111;white-space:pre;"><span style="color:#111">    guideY = (</span><span style="color:#1414ff">int</span><span style="color:#111">)(pictY - boxY);</span></span>
<span class="t m" style="left:1207.3px;top:315.3px;font-size:11.3px;line-height:16px;color:#222;letter-spacing:1.22px;">))</span>
<div class="b" style="left:263px;top:184px;width:1px;height:376px;background:#808080;"></div>
<svg class="b" style="left:258px;top:173px;" width="11" height="11" viewBox="0 0 11 11"><rect x="0.5" y="0.5" width="10" height="10" fill="#fff" stroke="#808080"/><path d="M2.5 5.5 H8.5" stroke="#444"/></svg>
<div class="b" style="left:204px;top:562px;width:1394px;height:16px;background:#f7f7f7;"></div>
<div class="b" style="left:1581px;top:154px;width:16px;height:407px;background:#f0f0f0;"></div>
<div class="b" style="left:1581px;top:171px;width:15px;height:55px;background:#cdcdcd;"></div>
<svg class="b" style="left:1584px;top:159px;" width="10" height="8" viewBox="0 0 10 8"><path d="M1.2 6.5 L5 2.7 L8.8 6.5" fill="none" stroke="#505050" stroke-width="1.9"/></svg>
<svg class="b" style="left:1584px;top:549px;" width="10" height="8" viewBox="0 0 10 8"><path d="M1.2 1.5 L5 5.3 L8.8 1.5" fill="none" stroke="#505050" stroke-width="1.9"/></svg>
<div class="b" style="left:205px;top:578px;width:1393px;height:294px;border:1px solid #dcdcdc;box-sizing:border-box;"></div>
<div class="b" style="left:209px;top:572px;width:58px;height:12px;background:#f7f7f7;"></div>
<span class="t" style="left:212px;top:570px;font-size:11px;line-height:16px;color:#111;letter-spacing:-0.169px;">Key words</span>
<div class="b" style="left:207px;top:588px;width:219px;height:280px;background:#fff;border:1px solid #9a9a9a;box-sizing:border-box;"></div>
<div class="b" style="left:208px;top:589px;width:201px;height:19px;background:#cce4f7;"></div>
<div class="b" style="left:208px;top:589px;width:201px;height:278px;overflow:hidden">
<span class="t" style="left:3px;top:2px;font-size:11px;line-height:16px;color:#3a3a52;letter-spacing:-0.550px;">(FU)</span>
<span class="t" style="left:35px;top:2px;font-size:11px;line-height:16px;color:#3a3a52;letter-spacing:-0.143px;">Image</span>
<span class="t" style="left:3px;top:21px;font-size:11px;line-height:16px;color:#3a3a52;letter-spacing:-0.550px;">(FU)</span>
<span class="t" style="left:35px;top:21px;font-size:11px;line-height:16px;color:#3a3a52;letter-spacing:-0.352px;">DrawLine</span>
<span class="t" style="left:3px;top:40px;font-size:11px;line-height:16px;color:#3a3a52;letter-spacing:-0.550px;">(FU)</span>
<span class="t" style="left:35px;top:40px;font-size:11px;line-height:16px;color:#3a3a52;letter-spacing:-0.183px;">DrawRectangle</span>
<span class="t" style="left:3px;top:59px;font-size:11px;line-height:16px;color:#3a3a52;letter-spacing:-0.550px;">(FU)</span>
<span class="t" style="left:35px;top:59px;font-size:11px;line-height:16px;color:#3a3a52;letter-spacing:-0.242px;">DrawPolygon</span>
<span class="t" style="left:3px;top:78px;font-size:11px;line-height:16px;color:#3a3a52;letter-spacing:-0.550px;">(FU)</span>
<span class="t" style="left:35px;top:78px;font-size:11px;line-height:16px;color:#3a3a52;letter-spacing:-0.309px;">DrawCircle</span>
<span class="t" style="left:3px;top:97px;font-size:11px;line-height:16px;color:#3a3a52;letter-spacing:-0.550px;">(FU)</span>
<span class="t" style="left:35px;top:97px;font-size:11px;line-height:16px;color:#3a3a52;letter-spacing:-0.273px;">DrawCircleArc</span>
<span class="t" style="left:3px;top:116px;font-size:11px;line-height:16px;color:#3a3a52;letter-spacing:-0.550px;">(FU)</span>
<span class="t" style="left:35px;top:116px;font-size:11px;line-height:16px;color:#3a3a52;letter-spacing:-0.407px;">DrawEllipse</span>
<span class="t" style="left:3px;top:135px;font-size:11px;line-height:16px;color:#3a3a52;letter-spacing:-0.550px;">(FU)</span>
<span class="t" style="left:35px;top:135px;font-size:11px;line-height:16px;color:#3a3a52;letter-spacing:-0.028px;">DrawArc</span>
<span class="t" style="left:3px;top:154px;font-size:11px;line-height:16px;color:#3a3a52;letter-spacing:-0.550px;">(FU)</span>
<span class="t" style="left:35px;top:154px;font-size:11px;line-height:16px;color:#3a3a52;letter-spacing:-0.155px;">DrawImage</span>
<span class="t" style="left:3px;top:173px;font-size:11px;line-height:16px;color:#3a3a52;letter-spacing:-0.550px;">(FU)</span>
<span class="t" style="left:35px;top:173px;font-size:11px;line-height:16px;color:#3a3a52;letter-spacing:-0.053px;">DrawItemImage</span>
<span class="t" style="left:3px;top:192px;font-size:11px;line-height:16px;color:#3a3a52;letter-spacing:-0.550px;">(FU)</span>
<span class="t" style="left:35px;top:192px;font-size:11px;line-height:16px;color:#3a3a52;letter-spacing:-0.156px;">DrawString</span>
<span class="t" style="left:3px;top:211px;font-size:11px;line-height:16px;color:#3a3a52;letter-spacing:-0.550px;">(PH)</span>
<span class="t" style="left:35px;top:211px;font-size:11px;line-height:16px;color:#3a3a52;letter-spacing:-0.322px;">Color</span>
<span class="t" style="left:3px;top:230px;font-size:11px;line-height:16px;color:#3a3a52;letter-spacing:-0.550px;">(FU)</span>
<span class="t" style="left:35px;top:230px;font-size:11px;line-height:16px;color:#3a3a52;letter-spacing:-0.320px;">ResizeImage</span>
<span class="t" style="left:3px;top:249px;font-size:11px;line-height:16px;color:#3a3a52;letter-spacing:-0.550px;">(FU)</span>
<span class="t" style="left:35px;top:249px;font-size:11px;line-height:16px;color:#3a3a52;letter-spacing:-0.210px;">Stop</span>
<span class="t" style="left:3px;top:268px;font-size:11px;line-height:16px;color:#3a3a52;letter-spacing:-0.550px;">(FU)</span>
<span class="t" style="left:35px;top:268px;font-size:11px;line-height:16px;color:#3a3a52;letter-spacing:-0.288px;">TAB</span>
</div>
<div class="b" style="left:409px;top:589px;width:16px;height:278px;background:#f0f0f0;"></div>
<div class="b" style="left:409px;top:850px;width:15px;height:16px;background:#fff;border:1px solid #a8a8a8;box-sizing:border-box;"></div>
<svg class="b" style="left:413px;top:857px;" width="8" height="5" viewBox="0 0 8 5"><path d="M0.5 0.5 H7.5 L4 4.5 Z" fill="#606060"/></svg>
<div class="b" style="left:428px;top:578px;width:1px;height:292px;background:#dcdcdc;"></div>
<div class="b" style="left:435px;top:578px;width:1px;height:292px;background:#dcdcdc;"></div>
<div class="b" style="left:438px;top:588px;width:1156px;height:280px;background:#ffffe1;border:1px solid #767676;box-shadow:inset 0 0 0 1px #fff;box-sizing:border-box;"></div>
<div class="b" style="left:1575px;top:590px;width:1px;height:276px;background:#fff;"></div>
<div class="b" style="left:1576px;top:590px;width:16px;height:276px;background:#f0f0f0;"></div>
<svg class="b" style="left:1579px;top:595px;" width="9" height="7" viewBox="0 0 9 7"><path d="M1 5.6 L4.5 2.1 L8 5.6" fill="none" stroke="#b9b9b9" stroke-width="1.9"/></svg>
<svg class="b" style="left:1579px;top:854px;" width="9" height="7" viewBox="0 0 9 7"><path d="M1 1.6 L4.5 5.1 L8 1.6" fill="none" stroke="#b9b9b9" stroke-width="1.9"/></svg>
<div class="b" style="left:1595px;top:578px;width:1px;height:292px;background:#dcdcdc;"></div>
<div class="b" style="left:206px;top:869px;width:1390px;height:1px;background:#e2e2e2;"></div>
<div class="b" style="left:0px;top:872px;width:1600px;height:28px;background:#f7f7f7;"></div>
<span class="t" style="left:14px;top:876px;font-size:11px;line-height:16px;color:#3a3a52;letter-spacing:0.022px;">Article [3 / 14369]</span>
<div class="b" style="left:111px;top:876px;width:1px;height:18px;background:#d8d8d8;"></div>
<span class="t" style="left:122px;top:876px;font-size:11px;line-height:16px;color:#3a3a52;letter-spacing:-0.284px;">Simple curtain</span>
<div class="b" style="left:2px;top:870px;width:198px;height:1px;background:#c8c8c8;"></div>
<div class="b" style="left:199px;top:871px;width:94px;height:26px;background:#fafafa;border-left:1px solid #d0d0d0;border-right:1px solid #cacaca;border-bottom:2px solid #b4b4b4;box-sizing:border-box;"></div>
<span class="t" style="left:210px;top:876px;font-size:11px;line-height:16px;color:#3a3a52;letter-spacing:-0.154px;">Rolling Shutter</span>
<svg class="b" style="left:1585px;top:884px;" width="7" height="4" viewBox="0 0 7 4"><path d="M0 0 H6.4 L3.2 3.4 Z" fill="#666"/></svg>
<div class="b" style="left:396px;top:105px;width:809px;height:682px;background:#f0f0f0;box-shadow:1px 2px 9px rgba(0,0,0,.30);border:1px solid #9c9c9c;border-left-color:#b4b4b4;box-sizing:border-box;"></div>
<div class="b" style="left:397px;top:106px;width:807px;height:30px;background:#fff;"></div>
<svg class="b" style="left:403px;top:111px;" width="18" height="18" viewBox="0 0 18 18"><ellipse cx="9" cy="9" rx="7.9" ry="7.9" fill="#fff" stroke="#b4b4b4" stroke-width="1"/><path d="M10.6 1.4 Q6.4 9 8 16.8 M10.6 1.4 Q12.4 9.6 8 16.8" stroke="#b4b4b4" stroke-width="0.9" fill="none"/></svg>
<span class="t" style="left:425.5px;top:111.5px;font-size:12px;line-height:18px;color:#a39ca3;letter-spacing:-0.122px;">Rolling Shutter</span>
<svg class="b" style="left:1183px;top:114px;" width="12" height="12" viewBox="0 0 12 12"><path d="M1 1 L11 11 M11 1 L1 11" stroke="#6e6e6e" stroke-width="1" fill="none"/></svg>
<div class="b" style="left:396px;top:136px;width:299px;height:606px;background:#fff;border:1px solid #84848c;box-sizing:border-box;"></div>
<div class="b" style="left:397px;top:138px;width:296px;height:17px;background:#dcdcdc;"></div>
<div class="b" style="left:397px;top:154px;width:296px;height:1px;background:#bdbdbd;"></div>
<span class="t" style="left:416px;top:137.7px;font-size:11.5px;line-height:16px;color:#1a1a1a;font-weight:bold;letter-spacing:0.277px;">Measures</span>
<div class="b" style="left:397px;top:155px;width:162px;height:18px;background:#6dd6fb;"></div>
<div class="b" style="left:397px;top:173px;width:296px;height:1px;background:#c9c9c9;"></div>
<div class="b" style="left:559px;top:155px;width:1px;height:19px;background:#c9c9c9;"></div>
<span class="t" style="left:415px;top:155.5px;font-size:11.5px;line-height:16px;color:#111;letter-spacing:-0.261px;">Quantity</span>
<div class="b" style="left:560px;top:155px;width:133px;height:18px;background:#fff;outline:1px dotted #000;outline-offset:-1px;"></div>
<div class="b" style="left:564px;top:157px;width:7px;height:13px;background:#0a6ad8;"></div>
<span class="t" style="left:564.3px;top:155.5px;font-size:11.5px;line-height:16px;color:#fff;">1</span>
<div class="b" style="left:397px;top:174px;width:162px;height:18px;background:#f0f0f0;"></div>
<div class="b" style="left:397px;top:192px;width:296px;height:1px;background:#c9c9c9;"></div>
<div class="b" style="left:559px;top:174px;width:1px;height:19px;background:#c9c9c9;"></div>
<span class="t" style="left:415px;top:174.5px;font-size:11.5px;line-height:16px;color:#111;letter-spacing:-0.550px;">Width</span>
<span class="t" style="left:564px;top:174.5px;font-size:11.5px;line-height:16px;color:#111;letter-spacing:-0.550px;">100</span>
<div class="b" style="left:397px;top:193px;width:162px;height:18px;background:#f0f0f0;"></div>
<div class="b" style="left:397px;top:211px;width:296px;height:1px;background:#c9c9c9;"></div>
<div class="b" style="left:559px;top:193px;width:1px;height:19px;background:#c9c9c9;"></div>
<span class="t" style="left:415px;top:193.5px;font-size:11.5px;line-height:16px;color:#111;letter-spacing:-0.448px;">Height</span>
<span class="t" style="left:564px;top:193.5px;font-size:11.5px;line-height:16px;color:#111;letter-spacing:-0.550px;">100</span>
<div class="b" style="left:397px;top:212px;width:296px;height:17px;background:#dcdcdc;"></div>
<div class="b" style="left:397px;top:228px;width:296px;height:1px;background:#bdbdbd;"></div>
<span class="t" style="left:416px;top:211.7px;font-size:11.5px;line-height:16px;color:#1a1a1a;font-weight:bold;letter-spacing:-0.268px;">Casing</span>
<div class="b" style="left:397px;top:229px;width:162px;height:18px;background:#cd9e51;"></div>
<div class="b" style="left:397px;top:247px;width:296px;height:1px;background:#c9c9c9;"></div>
<div class="b" style="left:559px;top:229px;width:1px;height:19px;background:#c9c9c9;"></div>
<span class="t" style="left:415px;top:229.5px;font-size:11.5px;line-height:16px;color:#111;letter-spacing:-0.550px;">Form</span>
<span class="t" style="left:564px;top:229.5px;font-size:11.5px;line-height:16px;color:#111;letter-spacing:-0.195px;">45°</span>
<svg class="b" style="left:680px;top:235px;" width="9" height="5" viewBox="0 0 9 5"><path d="M0 0 H9 L4.5 5 Z" fill="#111"/></svg>
<div class="b" style="left:397px;top:248px;width:162px;height:18px;background:#cd9e51;"></div>
<div class="b" style="left:397px;top:266px;width:296px;height:1px;background:#c9c9c9;"></div>
<div class="b" style="left:559px;top:248px;width:1px;height:19px;background:#c9c9c9;"></div>
<span class="t" style="left:415px;top:248.5px;font-size:11.5px;line-height:16px;color:#111;letter-spacing:-0.550px;">Size</span>
<span class="t" style="left:564px;top:248.5px;font-size:11.5px;line-height:16px;color:#111;letter-spacing:-0.550px;">137</span>
<svg class="b" style="left:680px;top:254px;" width="9" height="5" viewBox="0 0 9 5"><path d="M0 0 H9 L4.5 5 Z" fill="#111"/></svg>
<div class="b" style="left:397px;top:267px;width:162px;height:18px;background:#cd9e51;"></div>
<div class="b" style="left:397px;top:285px;width:296px;height:1px;background:#c9c9c9;"></div>
<div class="b" style="left:559px;top:267px;width:1px;height:19px;background:#c9c9c9;"></div>
<span class="t" style="left:415px;top:267.5px;font-size:11.5px;line-height:16px;color:#111;letter-spacing:-0.370px;">Color</span>
<span class="t" style="left:564px;top:267.5px;font-size:11.5px;line-height:16px;color:#111;letter-spacing:-0.212px;">white</span>
<svg class="b" style="left:680px;top:273px;" width="9" height="5" viewBox="0 0 9 5"><path d="M0 0 H9 L4.5 5 Z" fill="#111"/></svg>
<div class="b" style="left:397px;top:286px;width:296px;height:17px;background:#dcdcdc;"></div>
<div class="b" style="left:397px;top:302px;width:296px;height:1px;background:#bdbdbd;"></div>
<span class="t" style="left:416px;top:285.7px;font-size:11.5px;line-height:16px;color:#1a1a1a;font-weight:bold;letter-spacing:0.125px;">Curtain</span>
<div class="b" style="left:397px;top:303px;width:162px;height:18px;background:#cdb951;"></div>
<div class="b" style="left:397px;top:321px;width:296px;height:1px;background:#c9c9c9;"></div>
<div class="b" style="left:559px;top:303px;width:1px;height:19px;background:#c9c9c9;"></div>
<span class="t" style="left:415px;top:303.5px;font-size:11.5px;line-height:16px;color:#111;letter-spacing:-0.272px;">Material</span>
<span class="t" style="left:564px;top:303.5px;font-size:11.5px;line-height:16px;color:#111;letter-spacing:-0.550px;">ALU</span>
<svg class="b" style="left:680px;top:309px;" width="9" height="5" viewBox="0 0 9 5"><path d="M0 0 H9 L4.5 5 Z" fill="#111"/></svg>
<div class="b" style="left:397px;top:322px;width:162px;height:18px;background:#cdb951;"></div>
<div class="b" style="left:397px;top:340px;width:296px;height:1px;background:#c9c9c9;"></div>
<div class="b" style="left:559px;top:322px;width:1px;height:19px;background:#c9c9c9;"></div>
<span class="t" style="left:415px;top:322.5px;font-size:11.5px;line-height:16px;color:#111;letter-spacing:-0.229px;">SlatHeight</span>
<span class="t" style="left:564px;top:322.5px;font-size:11.5px;line-height:16px;color:#111;letter-spacing:-0.550px;">32</span>
<svg class="b" style="left:680px;top:328px;" width="9" height="5" viewBox="0 0 9 5"><path d="M0 0 H9 L4.5 5 Z" fill="#111"/></svg>
<div class="b" style="left:397px;top:341px;width:162px;height:18px;background:#cdb951;"></div>
<div class="b" style="left:397px;top:359px;width:296px;height:1px;background:#c9c9c9;"></div>
<div class="b" style="left:559px;top:341px;width:1px;height:19px;background:#c9c9c9;"></div>
<span class="t" style="left:415px;top:341.5px;font-size:11.5px;line-height:16px;color:#111;letter-spacing:-0.370px;">Color</span>
<span class="t" style="left:564px;top:341.5px;font-size:11.5px;line-height:16px;color:#111;letter-spacing:-0.212px;">white</span>
<svg class="b" style="left:680px;top:347px;" width="9" height="5" viewBox="0 0 9 5"><path d="M0 0 H9 L4.5 5 Z" fill="#111"/></svg>
<div class="b" style="left:397px;top:360px;width:296px;height:17px;background:#dcdcdc;"></div>
<div class="b" style="left:397px;top:376px;width:296px;height:1px;background:#bdbdbd;"></div>
<span class="t" style="left:416px;top:359.7px;font-size:11.5px;line-height:16px;color:#1a1a1a;font-weight:bold;letter-spacing:0.347px;">Bottom Slat</span>
<div class="b" style="left:397px;top:377px;width:162px;height:18px;background:#b9cd4f;"></div>
<div class="b" style="left:397px;top:395px;width:296px;height:1px;background:#c9c9c9;"></div>
<div class="b" style="left:559px;top:377px;width:1px;height:19px;background:#c9c9c9;"></div>
<span class="t" style="left:415px;top:377.5px;font-size:11.5px;line-height:16px;color:#111;letter-spacing:-0.067px;">Tilted bottom slat</span>
<div class="b" style="left:620px;top:379px;width:13px;height:13px;background:#fff;border:1px solid #8a8a8a;box-sizing:border-box;box-shadow:inset 0 0 0 1px #dedede;"></div>
<div class="b" style="left:397px;top:396px;width:162px;height:18px;background:#b9cd4f;"></div>
<div class="b" style="left:397px;top:414px;width:296px;height:1px;background:#c9c9c9;"></div>
<div class="b" style="left:559px;top:396px;width:1px;height:19px;background:#c9c9c9;"></div>
<span class="t" style="left:415px;top:396.5px;font-size:11.5px;line-height:16px;color:#111;letter-spacing:-0.124px;">Differing color</span>
<div class="b" style="left:620px;top:398px;width:13px;height:13px;background:#fff;border:1px solid #8a8a8a;box-sizing:border-box;box-shadow:inset 0 0 0 1px #dedede;"></div>
<div class="b" style="left:397px;top:415px;width:162px;height:18px;background:#b9cd4f;"></div>
<div class="b" style="left:397px;top:433px;width:296px;height:1px;background:#c9c9c9;"></div>
<div class="b" style="left:559px;top:415px;width:1px;height:19px;background:#c9c9c9;"></div>
<span class="t" style="left:415px;top:415.5px;font-size:11.5px;line-height:16px;color:#111;letter-spacing:-0.202px;">rotatable Stopper</span>
<div class="b" style="left:620px;top:417px;width:13px;height:13px;background:#fff;border:1px solid #8a8a8a;box-sizing:border-box;box-shadow:inset 0 0 0 1px #dedede;"></div>
<div class="b" style="left:397px;top:434px;width:296px;height:17px;background:#dcdcdc;"></div>
<div class="b" style="left:397px;top:450px;width:296px;height:1px;background:#bdbdbd;"></div>
<span class="t" style="left:416px;top:433.7px;font-size:11.5px;line-height:16px;color:#1a1a1a;font-weight:bold;letter-spacing:0.064px;">Guide channel</span>
<div class="b" style="left:397px;top:451px;width:162px;height:18px;background:#9acd4c;"></div>
<div class="b" style="left:397px;top:469px;width:296px;height:1px;background:#c9c9c9;"></div>
<div class="b" style="left:559px;top:451px;width:1px;height:19px;background:#c9c9c9;"></div>
<span class="t" style="left:415px;top:451.5px;font-size:11.5px;line-height:16px;color:#111;letter-spacing:-0.272px;">Material</span>
<span class="t" style="left:564px;top:451.5px;font-size:11.5px;line-height:16px;color:#111;letter-spacing:-0.550px;">ALU</span>
<svg class="b" style="left:680px;top:457px;" width="9" height="5" viewBox="0 0 9 5"><path d="M0 0 H9 L4.5 5 Z" fill="#111"/></svg>
<div class="b" style="left:397px;top:470px;width:162px;height:18px;background:#9acd4c;"></div>
<div class="b" style="left:397px;top:488px;width:296px;height:1px;background:#c9c9c9;"></div>
<div class="b" style="left:559px;top:470px;width:1px;height:19px;background:#c9c9c9;"></div>
<span class="t" style="left:415px;top:470.5px;font-size:11.5px;line-height:16px;color:#111;letter-spacing:-0.550px;">Size</span>
<span class="t" style="left:564px;top:470.5px;font-size:11.5px;line-height:16px;color:#111;letter-spacing:-0.550px;">Mini</span>
<svg class="b" style="left:680px;top:476px;" width="9" height="5" viewBox="0 0 9 5"><path d="M0 0 H9 L4.5 5 Z" fill="#111"/></svg>
<div class="b" style="left:397px;top:489px;width:162px;height:18px;background:#9acd4c;"></div>
<div class="b" style="left:397px;top:507px;width:296px;height:1px;background:#c9c9c9;"></div>
<div class="b" style="left:559px;top:489px;width:1px;height:19px;background:#c9c9c9;"></div>
<span class="t" style="left:415px;top:489.5px;font-size:11.5px;line-height:16px;color:#111;letter-spacing:-0.124px;">Differing color</span>
<div class="b" style="left:620px;top:491px;width:13px;height:13px;background:#fff;border:1px solid #8a8a8a;box-sizing:border-box;box-shadow:inset 0 0 0 1px #dedede;"></div>
<div class="b" style="left:397px;top:508px;width:162px;height:18px;background:#9acd4c;"></div>
<div class="b" style="left:397px;top:526px;width:296px;height:1px;background:#c9c9c9;"></div>
<div class="b" style="left:559px;top:508px;width:1px;height:19px;background:#c9c9c9;"></div>
<span class="t" style="left:415px;top:508.5px;font-size:11.5px;line-height:16px;color:#111;letter-spacing:-0.313px;">Extension</span>
<span class="t" style="left:564px;top:508.5px;font-size:11.5px;line-height:16px;color:#111;letter-spacing:0.000px;">0</span>
<div class="b" style="left:397px;top:527px;width:162px;height:18px;background:#9acd4c;"></div>
<div class="b" style="left:397px;top:545px;width:296px;height:1px;background:#c9c9c9;"></div>
<div class="b" style="left:559px;top:527px;width:1px;height:19px;background:#c9c9c9;"></div>
<span class="t" style="left:415px;top:527.5px;font-size:11.5px;line-height:16px;color:#111;letter-spacing:-0.379px;">Bevel cut in degrees</span>
<span class="t" style="left:564px;top:527.5px;font-size:11.5px;line-height:16px;color:#111;letter-spacing:0.000px;">0</span>
<div class="b" style="left:397px;top:546px;width:296px;height:17px;background:#dcdcdc;"></div>
<div class="b" style="left:397px;top:562px;width:296px;height:1px;background:#bdbdbd;"></div>
<span class="t" style="left:416px;top:545.7px;font-size:11.5px;line-height:16px;color:#1a1a1a;font-weight:bold;letter-spacing:0.211px;">Operation</span>
<div class="b" style="left:397px;top:563px;width:162px;height:18px;background:#519acd;"></div>
<div class="b" style="left:397px;top:581px;width:296px;height:1px;background:#c9c9c9;"></div>
<div class="b" style="left:559px;top:563px;width:1px;height:19px;background:#c9c9c9;"></div>
<span class="t" style="left:415px;top:563.5px;font-size:11.5px;line-height:16px;color:#111;letter-spacing:-0.550px;">Side</span>
<span class="t" style="left:564px;top:563.5px;font-size:11.5px;line-height:16px;color:#111;letter-spacing:-0.114px;">left</span>
<svg class="b" style="left:680px;top:569px;" width="9" height="5" viewBox="0 0 9 5"><path d="M0 0 H9 L4.5 5 Z" fill="#111"/></svg>
<div class="b" style="left:397px;top:582px;width:162px;height:18px;background:#519acd;"></div>
<div class="b" style="left:397px;top:600px;width:296px;height:1px;background:#c9c9c9;"></div>
<div class="b" style="left:559px;top:582px;width:1px;height:19px;background:#c9c9c9;"></div>
<span class="t" style="left:415px;top:582.5px;font-size:11.5px;line-height:16px;color:#111;letter-spacing:-0.188px;">Operation</span>
<span class="t" style="left:564px;top:582.5px;font-size:11.5px;line-height:16px;color:#111;letter-spacing:-0.361px;">Tape coiler</span>
<svg class="b" style="left:680px;top:588px;" width="9" height="5" viewBox="0 0 9 5"><path d="M0 0 H9 L4.5 5 Z" fill="#111"/></svg>
<div class="b" style="left:397px;top:601px;width:162px;height:18px;background:#519acd;"></div>
<div class="b" style="left:397px;top:619px;width:296px;height:1px;background:#c9c9c9;"></div>
<div class="b" style="left:559px;top:601px;width:1px;height:19px;background:#c9c9c9;"></div>
<span class="t" style="left:415px;top:601.5px;font-size:11.5px;line-height:16px;color:#111;letter-spacing:-0.118px;">Tape color</span>
<span class="t" style="left:564px;top:601.5px;font-size:11.5px;line-height:16px;color:#111;letter-spacing:-0.212px;">white</span>
<svg class="b" style="left:680px;top:607px;" width="9" height="5" viewBox="0 0 9 5"><path d="M0 0 H9 L4.5 5 Z" fill="#111"/></svg>
<div class="b" style="left:397px;top:620px;width:296px;height:17px;background:#dcdcdc;"></div>
<div class="b" style="left:397px;top:636px;width:296px;height:1px;background:#bdbdbd;"></div>
<span class="t" style="left:416px;top:619.7px;font-size:11.5px;line-height:16px;color:#1a1a1a;font-weight:bold;letter-spacing:0.128px;">Additional notes</span>
<div class="b" style="left:397px;top:637px;width:162px;height:18px;background:#9062cd;"></div>
<div class="b" style="left:397px;top:655px;width:296px;height:1px;background:#c9c9c9;"></div>
<div class="b" style="left:559px;top:637px;width:1px;height:19px;background:#c9c9c9;"></div>
<span class="t" style="left:415px;top:637.5px;font-size:11.5px;line-height:16px;color:#111;letter-spacing:-0.089px;">Additional text</span>
<div class="b" style="left:397px;top:656px;width:162px;height:18px;background:#9062cd;"></div>
<div class="b" style="left:397px;top:674px;width:296px;height:1px;background:#c9c9c9;"></div>
<div class="b" style="left:559px;top:656px;width:1px;height:19px;background:#c9c9c9;"></div>
<span class="t" style="left:415px;top:656.5px;font-size:11.5px;line-height:16px;color:#111;letter-spacing:-0.100px;">Note for production</span>
<div class="b" style="left:700px;top:136px;width:504px;height:606px;background:#fff;border:1px solid #555;box-sizing:border-box;"></div>
<svg class="b" style="left:700px;top:137px;" width="504" height="605" viewBox="0 0 504 605"><g stroke="#c4c4c4" stroke-width="1" fill="none" shape-rendering="crispEdges"><path d="M357 137.5 H459 M357 181.5 H408 M357 457.5 H459"/><path d="M382.5 181 V310 M382.5 329 V457"/><path d="M432.5 137 V288 M432.5 307 V457"/><path d="M37.5 457 V484 M357.5 457 V484"/><path d="M37 470.5 H168 M227 470.5 H358"/></g><rect x="37" y="137" width="321" height="321" fill="#fafafa" stroke="none"/><path d="M37 168.5 H358" stroke="#c4c4c4" shape-rendering="crispEdges"/><g stroke="#000" stroke-width="1" fill="none" shape-rendering="crispEdges"><path d="M37 137.5 H358 M37 181.5 H358 M37 457.5 H358 M54 445.5 H341"/><path d="M37.5 137 V458 M357.5 137 V458 M54.5 181 V458 M340.5 181 V458"/></g><circle cx="59.4" cy="159.4" r="15.2" fill="#c8c8c8" stroke="#000" stroke-width="1"/></svg>
<span class="t" style="left:739.5px;top:258px;font-size:10.5px;line-height:16px;color:#9c9ca2;font-weight:bold;letter-spacing:0.250px;">View from inside</span>
<span class="t" style="left:756.2px;top:289px;font-size:9px;line-height:16px;color:#333;">T</span>
<span class="t" style="left:1074px;top:288px;font-size:10px;line-height:16px;color:#a8a8ac;letter-spacing:-0.092px;">137</span>
<span class="t" style="left:1062px;top:448px;font-size:10px;line-height:16px;color:#a8a8ac;letter-spacing:0.274px;">86.30cm</span>
<span class="t" style="left:1110px;top:426px;font-size:10px;line-height:16px;color:#a8a8ac;letter-spacing:0.155px;">100.00cm</span>
<span class="t" style="left:874.5px;top:599px;font-size:10px;line-height:16px;color:#a8a8ac;letter-spacing:0.226px;">100.00cm</span>
<div class="b" style="left:1011px;top:752px;width:86px;height:24px;background:#e1e1e1;border:2px solid #0078d7;box-sizing:border-box;"></div>
<span class="t" style="left:1045px;top:755.5px;font-size:11.5px;line-height:16px;color:#000;letter-spacing:-0.116px;">OK</span>
<div class="b" style="left:1108px;top:752px;width:86px;height:24px;background:#e1e1e1;border:1px solid #adadad;box-sizing:border-box;"></div>
<span class="t" style="left:1136px;top:755.5px;font-size:11.5px;line-height:16px;color:#000;letter-spacing:0.128px;">Abort</span>
</body></html>
